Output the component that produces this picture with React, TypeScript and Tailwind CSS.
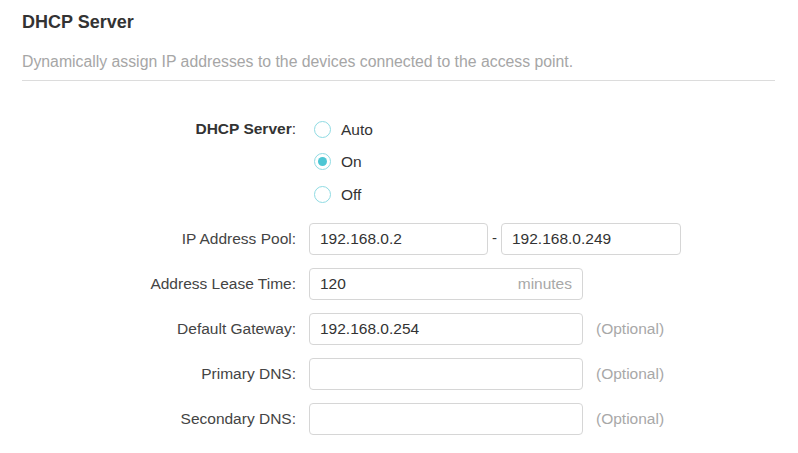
import React from "react";

const font = { fontFamily: '"Liberation Sans", Arial, sans-serif' };

function Radio({ label, checked }: { label: string; checked?: boolean }) {
  return (
    <div className="flex h-[32.5px] items-center">
      <span className="ml-[18px] flex h-[17px] w-[17px] items-center justify-center rounded-full border-[1.5px] border-[#8fdbe3] bg-white">
        {checked && <span className="h-[9px] w-[9px] rounded-full bg-[#4cc6d4]" />}
      </span>
      <span className="ml-[10px] text-[15.5px] text-[#333]">{label}</span>
    </div>
  );
}

function Label({ children }: { children: React.ReactNode }) {
  return <div className="w-[274px] shrink-0 text-right text-[15.5px] text-[#444]">{children}</div>;
}

function Input({ value, width, suffix }: { value?: string; width: string; suffix?: string }) {
  return (
    <div className={`flex h-[32px] items-center justify-between rounded-[4px] border border-[#d6d6d6] bg-white px-[10px] ${width}`}>
      <span className="text-[15.5px] text-[#333]">{value}</span>
      {suffix && <span className="text-[15.5px] text-[#a8a8a8]">{suffix}</span>}
    </div>
  );
}

function Row({ label, children }: { label: string; children: React.ReactNode }) {
  return (
    <div className="flex h-[32px] items-center">
      <Label>{label}</Label>
      <div className="ml-[13px] flex items-center">{children}</div>
    </div>
  );
}

const Optional = () => <span className="ml-[13px] text-[15.5px] text-[#a8a8a8]">(Optional)</span>;

export default function App() {
  return (
    <div style={font} className="h-[453px] w-[798px] bg-white px-[22px] pt-[10px]">
      <div className="text-[18px] font-bold leading-[24px] text-[#333]">DHCP Server</div>
      <div className="mt-[18px] mr-[1px] border-b border-[#dcdcdc] pb-[8px] text-[15.8px] leading-[20px] text-[#a6a6a6]">
        Dynamically assign IP addresses to the devices connected to the access point.
      </div>

      <div className="mt-[32px] flex">
        <div className="flex h-[32px] w-[274px] items-center justify-end text-[15.5px] text-[#333]">
          <span className="font-bold">DHCP Server</span>
          <span>:</span>
        </div>
        <div className="flex flex-col">
          <Radio label="Auto" />
          <Radio label="On" checked />
          <Radio label="Off" />
        </div>
      </div>

      <div className="mt-[12px] flex flex-col gap-[13px]">
        <Row label="IP Address Pool:">
          <Input value="192.168.0.2" width="w-[179px]" />
          <span className="mx-[4px] text-[15px] text-[#333]">-</span>
          <Input value="192.168.0.249" width="w-[180px]" />
        </Row>
        <Row label="Address Lease Time:">
          <Input value="120" width="w-[274px]" suffix="minutes" />
        </Row>
        <Row label="Default Gateway:">
          <Input value="192.168.0.254" width="w-[274px]" />
          <Optional />
        </Row>
        <Row label="Primary DNS:">
          <Input width="w-[274px]" />
          <Optional />
        </Row>
        <Row label="Secondary DNS:">
          <Input width="w-[274px]" />
          <Optional />
        </Row>
      </div>
    </div>
  );
}
